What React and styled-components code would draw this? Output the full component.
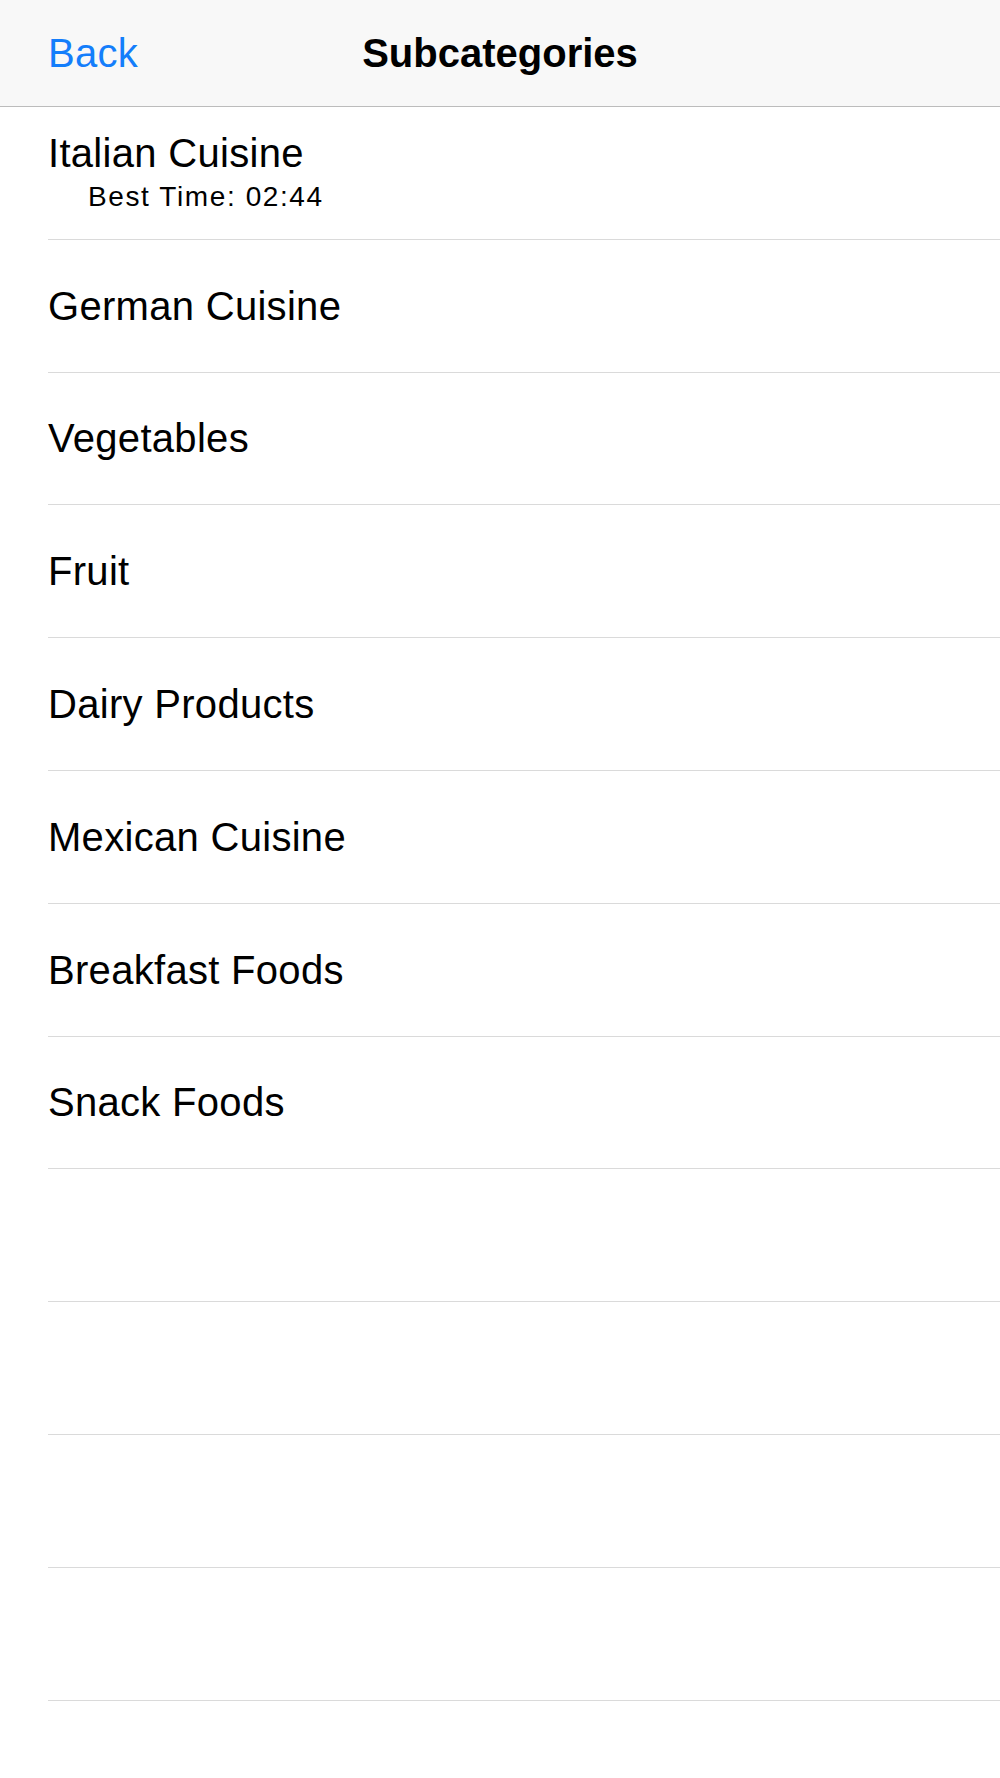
import React from "react";
import styled, { createGlobalStyle } from "styled-components";

const GlobalStyle = createGlobalStyle`
  html, body {
    margin: 0;
    padding: 0;
    background: #ffffff;
  }
  body {
    font-family: "Liberation Sans", Arial, sans-serif;
    -webkit-font-smoothing: antialiased;
  }
`;

const Screen = styled.div`
  width: 1000px;
  min-height: 1778px;
  background: #ffffff;
  overflow: hidden;
`;

const NavBar = styled.header`
  height: 106px;
  background: #f8f8f8;
  border-bottom: 1px solid #bcbcbc;
  display: grid;
  grid-template-columns: 1fr auto 1fr;
  align-items: center;
  padding: 0 48px;
`;

const BackButton = styled.button`
  justify-self: start;
  background: none;
  border: none;
  padding: 0;
  margin: 0;
  font-family: "Liberation Sans", Arial, sans-serif;
  font-size: 40px;
  line-height: 46px;
  letter-spacing: 0.3px;
  color: #147efb;
  cursor: pointer;
`;

const NavTitle = styled.h1`
  margin: 0;
  font-size: 40px;
  line-height: 46px;
  font-weight: 700;
  color: #000000;
  text-align: center;
`;

const List = styled.ul`
  list-style: none;
  margin: 0;
  padding: 0;
`;

const Row = styled.li`
  padding-left: 48px;
`;

const Cell = styled.div`
  box-sizing: border-box;
  height: 132.8px;
  border-bottom: 1px solid #dadada;
  display: flex;
  flex-direction: column;
  justify-content: center;
  padding-bottom: ${(p) => (p.$hasSub ? "2px" : "0")};
`;

const Title = styled.span`
  font-size: 40px;
  line-height: 46px;
  letter-spacing: 0.3px;
  color: #000000;
`;

const Subtitle = styled.span`
  margin-top: 4px;
  padding-left: 40px;
  font-size: 28px;
  line-height: 34px;
  letter-spacing: 1.6px;
  color: #000000;
`;

const items = [
  { title: "Italian Cuisine", sub: "Best Time: 02:44" },
  { title: "German Cuisine" },
  { title: "Vegetables" },
  { title: "Fruit" },
  { title: "Dairy Products" },
  { title: "Mexican Cuisine" },
  { title: "Breakfast Foods" },
  { title: "Snack Foods" },
  { title: "" },
  { title: "" },
  { title: "" },
  { title: "" },
];

export default function App() {
  return (
    <>
      <GlobalStyle />
      <Screen>
        <NavBar>
          <BackButton>Back</BackButton>
          <NavTitle>Subcategories</NavTitle>
          <span />
        </NavBar>
        <List>
          {items.map((item, i) => (
            <Row key={i}>
              <Cell $hasSub={!!item.sub}>
                {item.title && <Title>{item.title}</Title>}
                {item.sub && <Subtitle>{item.sub}</Subtitle>}
              </Cell>
            </Row>
          ))}
        </List>
      </Screen>
    </>
  );
}
